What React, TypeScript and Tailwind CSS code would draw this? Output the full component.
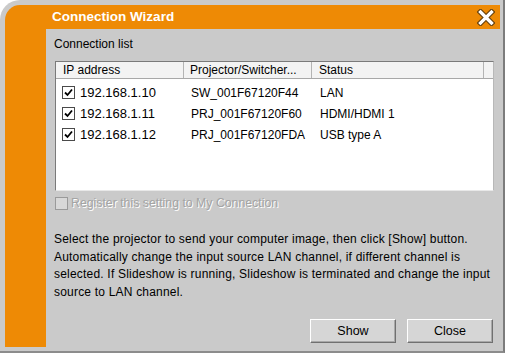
import React from "react";

const rows = [
  { ip: "192.168.1.10", name: "SW_001F67120F44", status: "LAN" },
  { ip: "192.168.1.11", name: "PRJ_001F67120F60", status: "HDMI/HDMI 1" },
  { ip: "192.168.1.12", name: "PRJ_001F67120FDA", status: "USB type A" },
];

function CheckBox() {
  return (
    <span className="w-[13px] h-[13px] border border-[#4a4a4a] bg-white flex items-center justify-center shrink-0">
      <svg width="9" height="9" viewBox="0 0 9 9">
        <path d="M1 4.5 L3.5 7 L8 1.5" stroke="#000" strokeWidth="1.8" fill="none" />
      </svg>
    </span>
  );
}

function WinButton({ label }: { label: string }) {
  return (
    <button className="w-[86px] h-[24px] bg-[#d6d6d6] border border-t-white border-l-white border-r-[#707070] border-b-[#707070] shadow-[inset_-1px_-1px_0_#a8a8a8] text-[12.5px] text-black">
      {label}
    </button>
  );
}

export default function App() {
  return (
    <div
      className="w-[505px] h-[353px] bg-[#cacaca] rounded-tl-[20px] border-r-2 border-b-2 border-r-[#7c7c7c] border-b-[#8c8c8c] pt-[5px] pl-[5px] pr-[3px] pb-[4px] flex overflow-hidden"
      style={{ fontFamily: '"Liberation Sans", Arial, sans-serif' }}
    >
      <div className="flex-1 min-w-0 flex flex-col bg-[#ee8a05] rounded-tl-[15px]">
        {/* Title bar */}
        <div className="h-[24px] flex items-center justify-between pl-[47px] pr-[5px] shrink-0">
          <span className="text-white font-bold text-[13.5px]">Connection Wizard</span>
          <svg width="18" height="17" viewBox="0 0 18 17">
            <path
              d="M3.5 3 L14.5 14 M14.5 3 L3.5 14"
              stroke="#6a4410"
              strokeWidth="5.5"
              strokeLinecap="square"
            />
            <path
              d="M3.5 3 L14.5 14 M14.5 3 L3.5 14"
              stroke="#fff"
              strokeWidth="3.2"
              strokeLinecap="square"
            />
          </svg>
        </div>
        <div className="flex-1 flex min-w-0">
          <div className="w-[41px] shrink-0" />
          {/* Panel */}
          <div className="flex-1 min-w-0 bg-[#cacaca] flex flex-col pl-[8px] pr-[6px] pt-[8px] text-[12px] text-black">
            <div className="leading-[15px]">Connection list</div>
            {/* List box */}
            <div className="mt-[9px] ml-[1px] h-[130px] bg-white border border-t-[#7a7a7a] border-l-[#7a7a7a] border-r-[#b8b8b8] border-b-[#e8e8e8] flex flex-col">
              <div className="h-[17px] flex bg-[#f3f3f3] border-b border-[#a8a8a8] leading-[16px]">
                <div className="w-[128px] pl-[7px] border-r border-[#b4b4b4]">IP address</div>
                <div className="w-[128px] pl-[6px] border-r border-[#b4b4b4] whitespace-nowrap overflow-hidden">
                  Projector/Switcher...
                </div>
                <div className="w-[172px] pl-[7px] border-r border-[#b4b4b4]">Status</div>
                <div className="flex-1" />
              </div>
              <div className="pt-[3px] flex flex-col">
                {rows.map((r) => (
                  <div key={r.ip} className="h-[21px] flex items-center">
                    <div className="w-[128px] flex items-center pl-[6px] gap-[5px]">
                      <CheckBox />
                      <span className="text-[13px]">{r.ip}</span>
                    </div>
                    <div className="w-[128px] pl-[7px] whitespace-nowrap">{r.name}</div>
                    <div className="pl-[8px]">{r.status}</div>
                  </div>
                ))}
              </div>
            </div>
            {/* Disabled checkbox */}
            <div className="mt-[5px] ml-[1px] flex items-center gap-[3px] h-[14px]">
              <span className="w-[13px] h-[13px] border border-[#9a9a9a] bg-[#d8d8d8] shrink-0" />
              <span className="text-[12.3px] text-[#a4a4a4] [text-shadow:1px_1px_0_#ffffff]">
                Register this setting to My Connection
              </span>
            </div>
            {/* Description */}
            <p className="mt-[21px] leading-[17.7px] whitespace-nowrap text-[12px] tracking-[0.2px]">
              Select the projector to send your computer image, then click [Show] button.
              <br />
              Automatically change the input source LAN channel, if different channel is
              <br />
              selected. If Slideshow is running, Slideshow is terminated and change the input
              <br />
              source to LAN channel.
            </p>
            <div className="flex-1" />
            <div className="flex justify-end gap-[11px] pr-[1px] pb-[4px]">
              <WinButton label="Show" />
              <WinButton label="Close" />
            </div>
          </div>
        </div>
      </div>
    </div>
  );
}
